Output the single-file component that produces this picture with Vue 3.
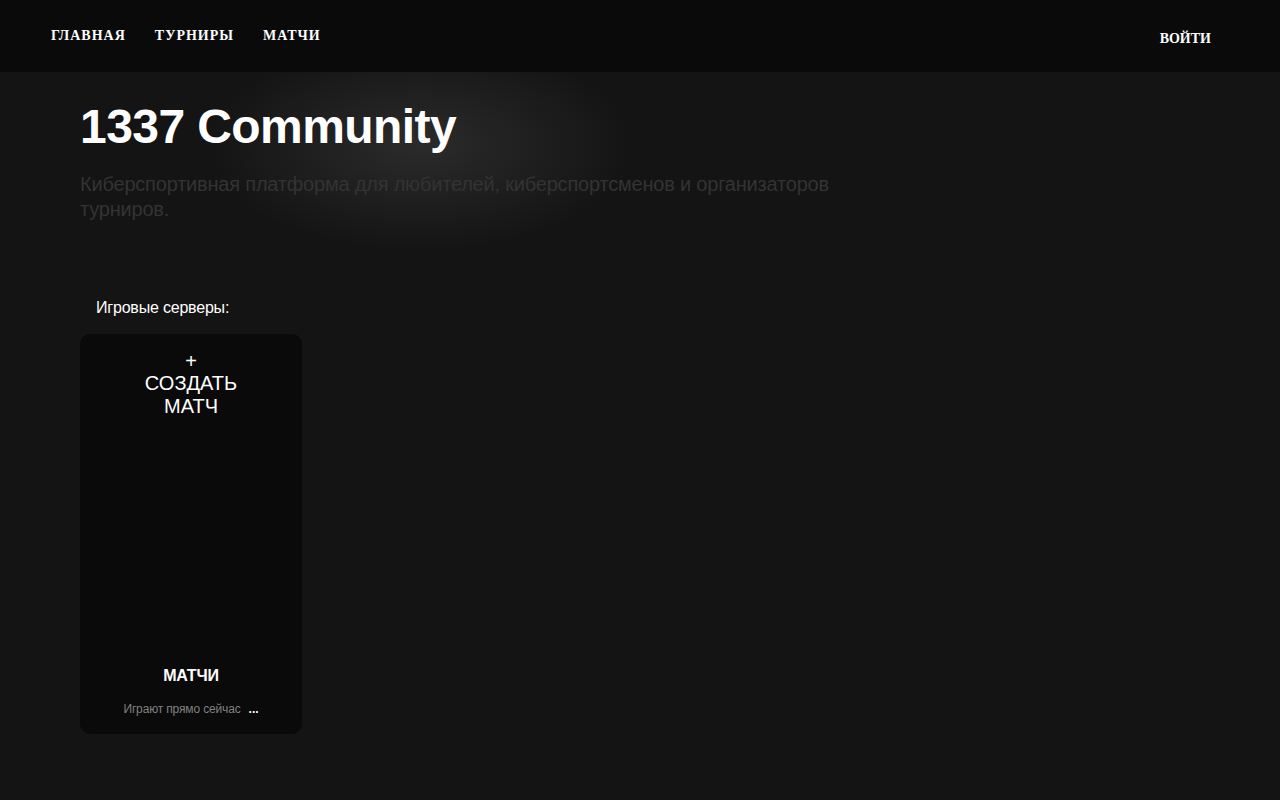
<script setup>
const navLinks = ['Главная', 'Турниры', 'Матчи'];
</script>

<template>
  <div class="page">
    <header class="topbar">
      <nav class="nav">
        <a v-for="link in navLinks" :key="link" class="nav-link" href="#">{{ link }}</a>
      </nav>
      <a class="login" href="#">Войти</a>
    </header>

    <main class="content">
      <section class="hero">
        <h1>1337 Community</h1>
        <p>Киберспортивная платформа для любителей, киберспортсменов и организаторов турниров.</p>
      </section>

      <h2 class="section-title">Игровые серверы:</h2>

      <div class="card">
        <div class="create">
          <span class="plus">+</span>
          <span>СОЗДАТЬ</span>
          <span>МАТЧ</span>
        </div>
        <div class="card-footer">
          <h3>МАТЧИ</h3>
          <div class="playing">
            <span class="playing-label">Играют прямо сейчас</span>
            <span class="playing-count">...</span>
          </div>
        </div>
      </div>
    </main>
  </div>
</template>

<style>
body {
  background: #141414;
}
</style>

<style scoped>
.page {
  min-height: 800px;
  font-family: "Liberation Sans", Arial, sans-serif;
  color: #fff;
  background: radial-gradient(ellipse 215px 105px at 420px 145px, #2b2b2b 0%, #141414 100%) #141414;
}

.topbar {
  height: 72px;
  box-sizing: border-box;
  display: flex;
  justify-content: space-between;
  background: #0a0a0a;
  padding: 0 69px 0 51px;
  font-family: "Liberation Serif", "Times New Roman", serif;
  font-weight: bold;
  font-size: 14px;
  text-transform: uppercase;
}

.nav {
  display: flex;
  gap: 29px;
  padding-top: 28px;
}

.nav-link,
.login {
  color: #fff;
  text-decoration: none;
  letter-spacing: 1px;
  line-height: 16px;
}

.login {
  padding-top: 31px;
  letter-spacing: 0;
}

.content {
  padding: 0 80px;
}

.hero {
  width: 780px;
}

.hero h1 {
  margin: 0;
  padding-top: 27px;
  font-size: 48px;
  line-height: 55px;
  font-weight: bold;
  letter-spacing: -0.57px;
}

.hero p {
  margin: 18px 0 0;
  font-size: 20px;
  line-height: 25px;
  color: #333;
  letter-spacing: -0.2px;
}

.section-title {
  margin: 77px 0 0;
  padding-left: 16px;
  font-size: 16px;
  line-height: 18px;
  font-weight: normal;
  letter-spacing: -0.2px;
}

.card {
  width: 222px;
  height: 400px;
  margin-top: 17px;
  box-sizing: border-box;
  border-radius: 10px;
  background: #0a0a0a;
  display: flex;
  flex-direction: column;
  justify-content: space-between;
  align-items: center;
  text-align: center;
}

.create {
  display: flex;
  flex-direction: column;
  padding-top: 17px;
  font-size: 20px;
  line-height: 23px;
}

.plus {
  line-height: 21px;
}

.card-footer {
  padding-bottom: 18px;
}

.card-footer h3 {
  margin: 0;
  font-size: 16px;
  line-height: 18px;
  font-weight: bold;
  letter-spacing: -0.2px;
}

.playing {
  display: flex;
  justify-content: center;
  gap: 8px;
  margin-top: 17px;
  font-size: 12px;
  line-height: 14px;
}

.playing-label {
  color: #808080;
  letter-spacing: -0.15px;
}

.playing-count {
  font-weight: bold;
}
</style>
